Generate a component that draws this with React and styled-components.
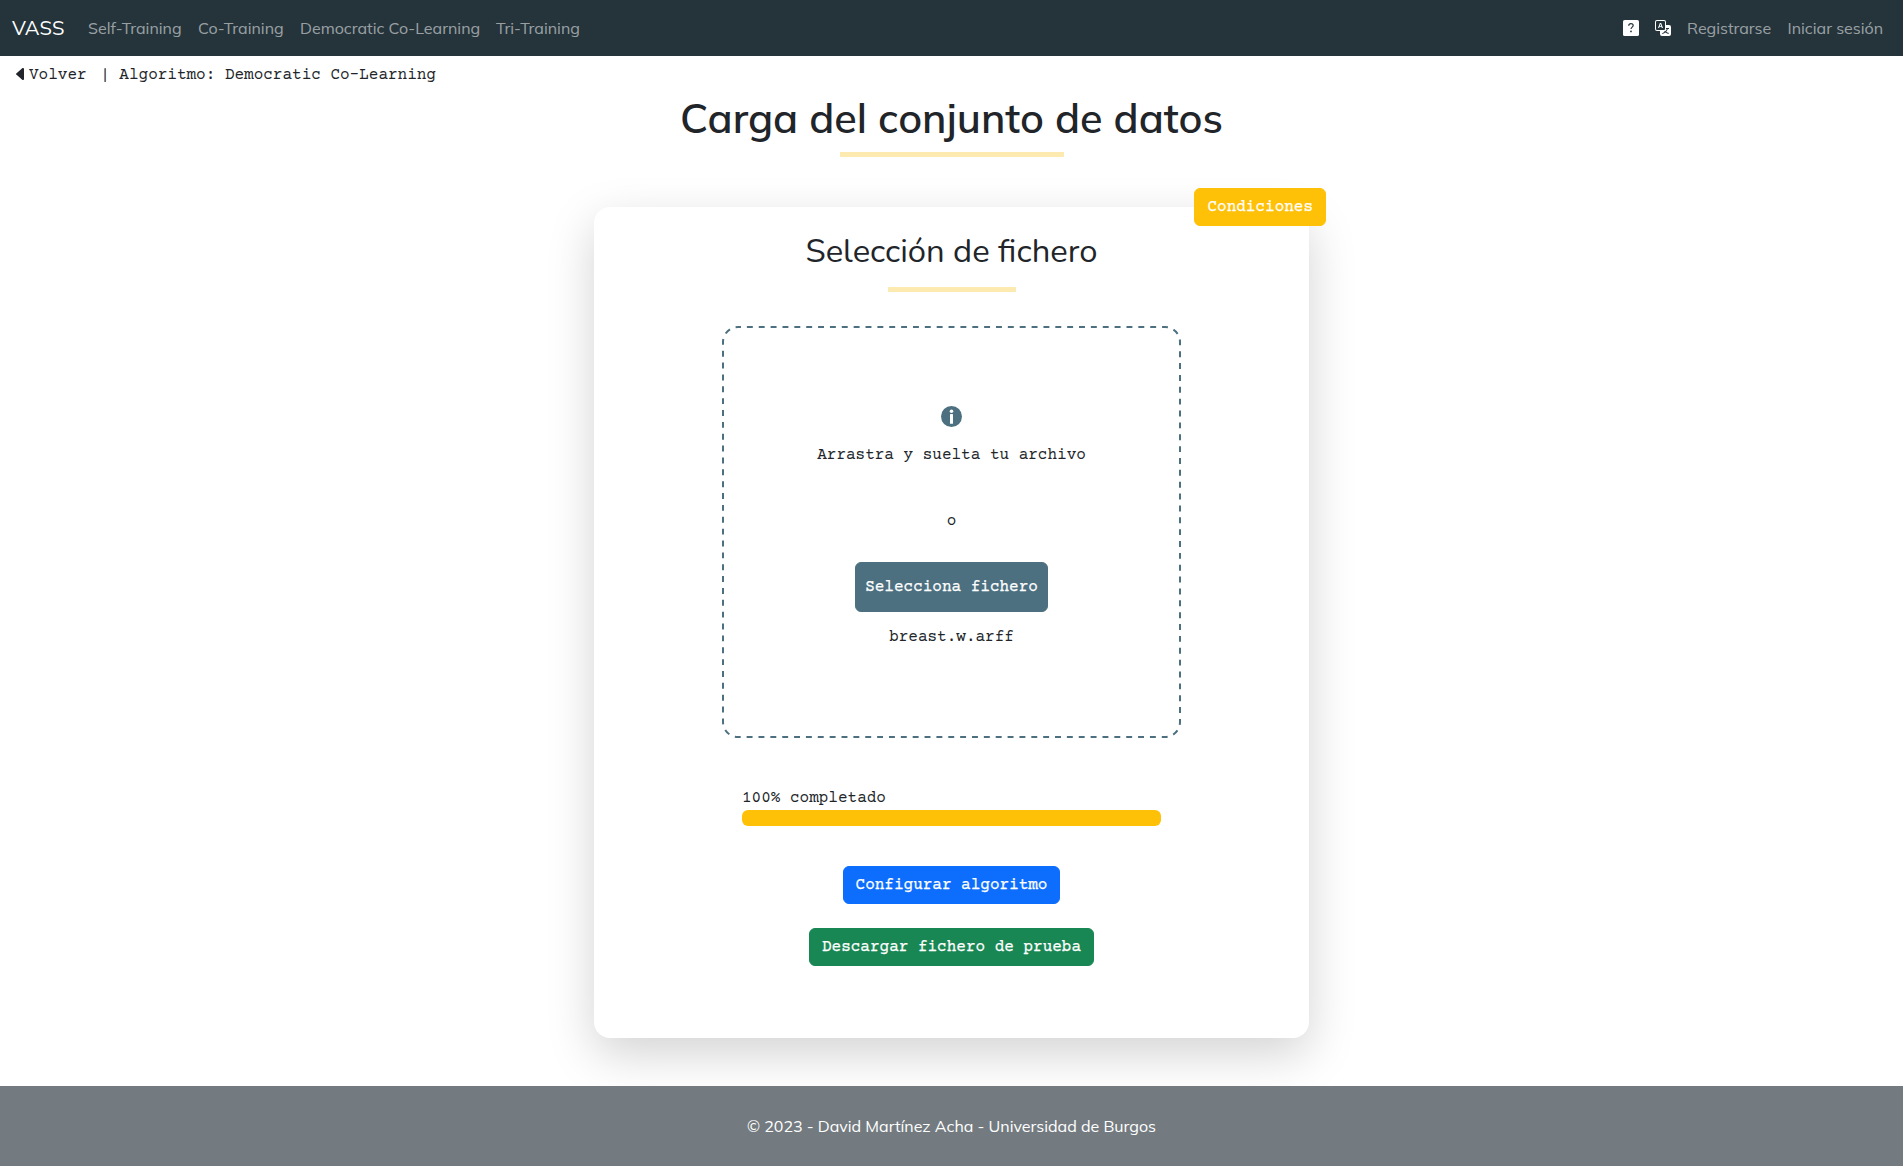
import React from "react";
import styled, { createGlobalStyle } from "styled-components";
import { BsTranslate } from "react-icons/bs";

const sans = `Mulish, Lato, "Open Sans", sans-serif`;
const mono = `"Courier Prime", "Liberation Mono", monospace`;

const GlobalStyle = createGlobalStyle`
  *, *::before, *::after { box-sizing: border-box; }
  body { margin: 0; background: #fff; color: #212529; font: 400 16px/24px ${mono}; }
  h1, h2, p { margin: 0; }
  button { cursor: pointer; }
  svg { display: block; flex: none; }
`;

const Page = styled.div`
  min-height: 1166px;
  display: flex;
  flex-direction: column;
`;

const Navbar = styled.nav`
  height: 56px;
  padding: 0 20px 0 12px;
  display: flex;
  align-items: center;
  background: #25343b;
  font-family: ${sans};
`;

const Brand = styled.a`
  width: 52px;
  margin-right: 24px;
  color: #fff;
  font-size: 20px;
  line-height: 30px;
  white-space: nowrap;
`;

const Links = styled.div`
  display: flex;
  gap: 16px;
  align-items: center;
  margin-left: ${(p) => (p.$end ? "auto" : 0)};
`;

const NavLink = styled.a`
  width: ${(p) => p.$w}px;
  color: rgba(255, 255, 255, 0.55);
  white-space: nowrap;
`;

const IconLink = styled.a`
  display: flex;
  color: #fff;
`;

const Breadcrumb = styled.div`
  height: 36px;
  padding: 7px 16px 5px;
  display: flex;
  align-items: center;
  white-space: pre;
`;

const BackLink = styled.a`
  display: flex;
  align-items: center;
  gap: 5px;
  margin-right: 4px;
`;

const BackArrow = styled.svg`
  margin-bottom: 2px;
`;

const Title = styled.h1`
  margin-top: 2px;
  height: 48px;
  text-align: center;
  font: 600 41.2px/48px ${sans};
`;

const Rule = styled.div`
  width: ${(p) => p.$w}px;
  height: 5px;
  margin: ${(p) => p.$top}px auto 0;
  background: #fceab0;
`;

const Card = styled.main`
  position: relative;
  width: 715px;
  height: 831px;
  margin: 50px auto 0;
  display: flex;
  flex-direction: column;
  align-items: center;
  border-radius: 16px;
  background: #fff;
  box-shadow: 0 16px 48px rgba(0, 0, 0, 0.175);
`;

const Button = styled.button`
  height: 38px;
  padding: 0 12px;
  border: 1px solid ${(p) => p.$color};
  border-radius: 6px;
  background: ${(p) => p.$color};
  color: #fff;
  font: 400 16px/24px ${mono};
  -webkit-text-stroke: 0.25px #fff;
  white-space: nowrap;
`;

const ConditionsButton = styled(Button)`
  position: absolute;
  top: -19px;
  right: -17px;
`;

const CardTitle = styled.h2`
  margin-top: 25px;
  height: 39px;
  font: 400 32.8px/39px Nunito, Lato, sans-serif;
`;

const DropZone = styled.section`
  position: relative;
  width: 459px;
  height: 412px;
  margin-top: 34px;
  padding-top: 80px;
  display: flex;
  flex-direction: column;
  align-items: center;
  border-radius: 16px;
`;

const Dashes = styled.svg`
  position: absolute;
  inset: 0;
`;

const DropText = styled.p`
  margin-top: ${(p) => p.$top}px;
`;

const FileButton = styled(Button)`
  height: 50px;
  padding: 0 9px;
  margin-top: 29px;
`;

const Progress = styled.div`
  width: 419px;
  margin-top: 48px;
`;

const ProgressBar = styled.div`
  height: 16px;
  border-radius: 6px;
  background: #ffc107;
`;

const Actions = styled.div`
  margin-top: 40px;
  display: flex;
  flex-direction: column;
  align-items: center;
  gap: 24px;
`;

const Footer = styled.footer`
  height: 80px;
  margin-top: 48px;
  position: relative;
  display: flex;
  align-items: center;
  justify-content: center;
  background: #737b80;
  color: #fff;
  font-family: ${sans};
`;

const HelpIcon = () => (
  <svg width="16" height="16" viewBox="0 0 16 16">
    <rect width="16" height="16" rx="1.6" fill="#fff" />
    <path d="M5.7 5.7C5.7 4.3 6.6 3.6 7.9 3.6s2.3.7 2.3 1.9c0 1.6-2.2 1.7-2.2 3.6" fill="none" stroke="#25343b" strokeWidth="1.2" />
    <circle cx="8" cy="11.4" r=".9" fill="#25343b" />
  </svg>
);

const BackIcon = () => (
  <BackArrow width="8" height="12" viewBox="0 0 8 12">
    <path d="M.3 5.4 6.2.3C6.9-.2 8 .2 8 1.1v9.8c0 .9-1.1 1.3-1.8.8L.3 6.6a.8.8 0 0 1 0-1.2z" fill="#212529" />
  </BackArrow>
);

const InfoIcon = () => (
  <svg width="21" height="21" viewBox="0 0 21 21">
    <circle cx="10.5" cy="10.5" r="10.5" fill="#4c7080" />
    <circle cx="10.5" cy="5.2" r="1.8" fill="#fff" />
    <rect x="9" y="8" width="3" height="9.8" rx=".6" fill="#fff" />
  </svg>
);

export default function App() {
  return (
    <Page>
      <GlobalStyle />
      <Navbar>
        <Brand>VASS</Brand>
        <Links>
          <NavLink $w={94}>Self-Training</NavLink>
          <NavLink $w={86}>Co-Training</NavLink>
          <NavLink $w={180}>Democratic Co-Learning</NavLink>
          <NavLink $w={85}>Tri-Training</NavLink>
        </Links>
        <Links $end>
          <IconLink><HelpIcon /></IconLink>
          <IconLink><BsTranslate size={16} /></IconLink>
          <NavLink $w={84.5}>Registrarse</NavLink>
          <NavLink $w={95.5}>Iniciar sesión</NavLink>
        </Links>
      </Navbar>
      <Breadcrumb>
        <BackLink><BackIcon />Volver</BackLink>
        <span> | Algoritmo: Democratic Co-Learning</span>
      </Breadcrumb>
      <Title>Carga del conjunto de datos</Title>
      <Rule $w={224} $top={10} />
      <Card>
        <ConditionsButton $color="#ffc107">Condiciones</ConditionsButton>
        <CardTitle>Selección de fichero</CardTitle>
        <Rule $w={128} $top={16} />
        <DropZone>
          <Dashes width="459" height="412">
            <rect x="1" y="1" width="457" height="410" rx="15" fill="none" stroke="#4c7080" strokeWidth="2" strokeDasharray="5.931 5.931" strokeDashoffset="2.966" />
          </Dashes>
          <InfoIcon />
          <DropText $top={16}>Arrastra y suelta tu archivo</DropText>
          <DropText $top={42}>o</DropText>
          <FileButton $color="#4c7080">Selecciona fichero</FileButton>
          <DropText $top={13}>breast.w.arff</DropText>
        </DropZone>
        <Progress>
          <p>100% completado</p>
          <ProgressBar />
        </Progress>
        <Actions>
          <Button $color="#0d6efd">Configurar algoritmo</Button>
          <Button $color="#198754">Descargar fichero de prueba</Button>
        </Actions>
      </Card>
      <Footer>© 2023 - David Martínez Acha - Universidad de Burgos</Footer>
    </Page>
  );
}
